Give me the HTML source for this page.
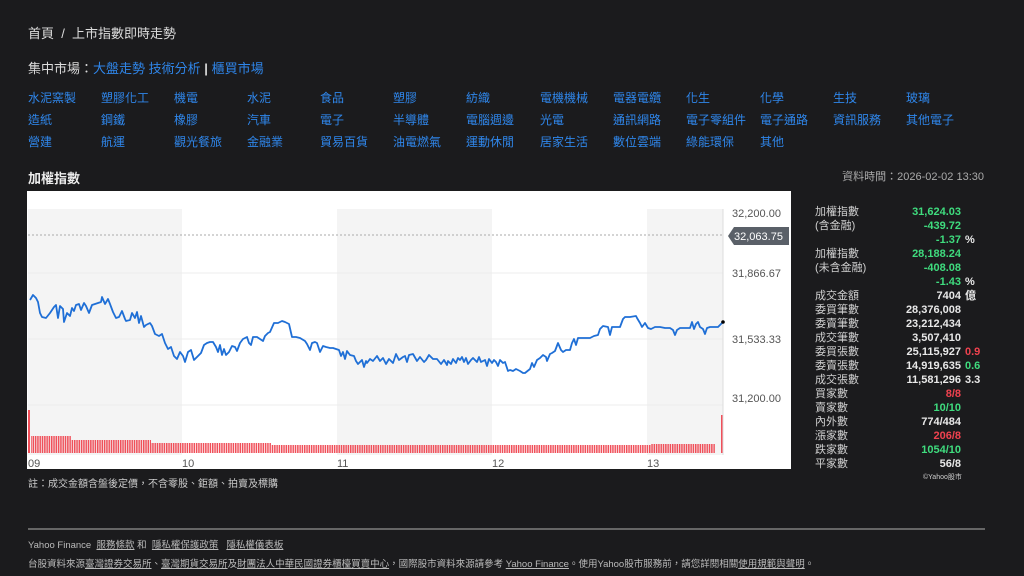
<!DOCTYPE html>
<html><head><meta charset="utf-8">
<style>
*{margin:0;padding:0;box-sizing:border-box}
body{width:1024px;height:576px;background:#1b1b1d;color:#e0e0e0;font-family:"Liberation Sans","Noto Sans CJK TC",sans-serif;position:relative;overflow:hidden}
.a{position:absolute;white-space:nowrap}
.l{color:#2f86ea}
.cat{position:absolute;font-size:12px;color:#2f86ea;line-height:14px}
.r{position:absolute;font-size:11px;line-height:14px;left:815px;color:#cfcfcf}
.v{position:absolute;font-size:11px;line-height:14px;right:63px;font-weight:bold;text-align:right}
.s{position:absolute;font-size:11px;line-height:14px;left:965px;font-weight:bold}
.g{color:#3fdc7e}.rd{color:#f0424f}.w{color:#e8e8e8}
.f{font-size:9.5px;color:#bbb}
.f u{color:#bbb}
</style></head><body>
<div class="a" style="left:28px;top:23px;font-size:13px;color:#ddd">首頁 &nbsp;/&nbsp; 上市指數即時走勢</div>
<div class="a" style="left:28px;top:58px;font-size:13px;color:#ddd">集中市場：<span class="l">大盤走勢</span> <span class="l">技術分析</span> <b>|</b> <span class="l">櫃買市場</span></div>

<div class="cat" style="left:28px;top:91px">水泥窯製</div><div class="cat" style="left:101px;top:91px">塑膠化工</div><div class="cat" style="left:174px;top:91px">機電</div><div class="cat" style="left:247px;top:91px">水泥</div><div class="cat" style="left:320px;top:91px">食品</div><div class="cat" style="left:393px;top:91px">塑膠</div><div class="cat" style="left:466px;top:91px">紡織</div><div class="cat" style="left:540px;top:91px">電機機械</div><div class="cat" style="left:613px;top:91px">電器電纜</div><div class="cat" style="left:686px;top:91px">化生</div><div class="cat" style="left:760px;top:91px">化學</div><div class="cat" style="left:833px;top:91px">生技</div><div class="cat" style="left:906px;top:91px">玻璃</div>
<div class="cat" style="left:28px;top:113px">造紙</div><div class="cat" style="left:101px;top:113px">鋼鐵</div><div class="cat" style="left:174px;top:113px">橡膠</div><div class="cat" style="left:247px;top:113px">汽車</div><div class="cat" style="left:320px;top:113px">電子</div><div class="cat" style="left:393px;top:113px">半導體</div><div class="cat" style="left:466px;top:113px">電腦週邊</div><div class="cat" style="left:540px;top:113px">光電</div><div class="cat" style="left:613px;top:113px">通訊網路</div><div class="cat" style="left:686px;top:113px">電子零組件</div><div class="cat" style="left:760px;top:113px">電子通路</div><div class="cat" style="left:833px;top:113px">資訊服務</div><div class="cat" style="left:906px;top:113px">其他電子</div>
<div class="cat" style="left:28px;top:135px">營建</div><div class="cat" style="left:101px;top:135px">航運</div><div class="cat" style="left:174px;top:135px">觀光餐旅</div><div class="cat" style="left:247px;top:135px">金融業</div><div class="cat" style="left:320px;top:135px">貿易百貨</div><div class="cat" style="left:393px;top:135px">油電燃氣</div><div class="cat" style="left:466px;top:135px">運動休閒</div><div class="cat" style="left:540px;top:135px">居家生活</div><div class="cat" style="left:613px;top:135px">數位雲端</div><div class="cat" style="left:686px;top:135px">綠能環保</div><div class="cat" style="left:760px;top:135px">其他</div>

<div class="a" style="left:28px;top:168px;font-size:13px;font-weight:bold;color:#eee">加權指數</div>
<div class="a" style="right:40px;top:168px;font-size:11px;color:#aaa">資料時間：2026-02-02 13:30</div>

<svg class="a" style="left:27px;top:191px" width="764" height="278" viewBox="27 191 764 278">
<defs><pattern id="bp" x="28" y="0" width="2.3" height="10" patternUnits="userSpaceOnUse"><rect x="0" y="0" width="1.5" height="10" fill="#f0505a"/></pattern></defs>
<rect x="27" y="191" width="764" height="278" fill="#fff"/>
<rect x="28" y="209" width="154" height="246" fill="#f4f4f4"/>
<rect x="337" y="209" width="155" height="246" fill="#f4f4f4"/>
<rect x="647" y="209" width="76" height="246" fill="#f4f4f4"/>
<g stroke="#ececec" stroke-width="1"><line x1="28" y1="273" x2="723" y2="273"/><line x1="28" y1="339" x2="723" y2="339"/><line x1="28" y1="405" x2="723" y2="405"/></g>
<line x1="28" y1="235" x2="723" y2="235" stroke="#aaa" stroke-dasharray="2,2"/>
<line x1="723" y1="209" x2="723" y2="455" stroke="#ddd"/>
<rect x="28" y="410" width="2" height="43" fill="#f0505a"/>
<rect x="31" y="436" width="40" height="17" fill="url(#bp)"/>
<rect x="71" y="440" width="80" height="13" fill="url(#bp)"/>
<rect x="151" y="443" width="120" height="10" fill="url(#bp)"/>
<rect x="271" y="445" width="380" height="8" fill="url(#bp)"/>
<rect x="651" y="444" width="64" height="9" fill="url(#bp)"/>
<rect x="721" y="415" width="1.5" height="38" fill="#f0505a"/>
<polyline fill="none" stroke="#1f6fd6" stroke-width="1.8" stroke-linejoin="round" points="30,300 33,295 36,298 38,302 40,313 42,317 46,318 50,313 54,307 56,305 58,318 60,306 63,309 64,322 67,313 70,316 72,308 74,311 76,305 79,304 81,310 84,303 86,306 89,313 92,305 95,304 98,303 101,302 102,297 105,304 108,299 110,304 113,312 116,318 119,317 122,311 125,319 126,321 130,320 132,313 135,318 137,312 139,323 141,316 144,327 146,325 150,323 152,326 155,334 159,336 162,334 165,343 168,349 171,347 174,356 177,359 180,352 183,356 185,362 188,352 191,350 194,360 197,357 201,353 204,345 207,343 210,342 213,342 216,347 218,352 220,345 222,355 224,349 226,355 229,352 232,346 235,347 237,351 240,343 243,339 247,337 249,343 251,345 253,337 257,337 260,339 263,341 265,336 268,333 270,332 274,323 278,323 282,321 285,322 289,324 292,337 296,337 300,338 305,341 307,344 310,350 312,343 315,342 317,343 320,352 323,346 326,347 330,348 333,348 336,349 339,350 341,356 343,352 345,359 347,351 350,355 354,356 356,361 358,364 360,362 362,360 364,367 366,361 367,363 370,359 373,361 377,356 380,361 383,358 386,364 389,359 393,363 396,354 399,360 403,357 405,356 407,362 409,355 413,354 417,361 420,357 424,362 426,360 429,355 433,359 437,359 441,364 444,360 447,365 448,361 451,364 453,359 456,363 458,358 460,360 462,357 464,362 466,358 468,364 471,360 473,358 475,360 477,362 479,357 481,362 483,361 485,360 487,366 489,359 492,363 494,360 496,362 498,366 500,360 503,363 505,362 508,371 510,370 513,371 516,369 520,371 523,373 525,373 530,369 532,363 534,367 537,360 540,358 543,355 546,357 547,361 550,354 552,353 555,351 558,343 561,350 563,352 566,350 570,350 572,343 574,339 576,345 578,338 582,338 586,338 590,338 594,336 598,335 600,329 603,326 608,327 610,335 612,327 615,327 620,327 623,319 625,317 630,317 636,316 637,318 640,323 642,327 645,323 648,328 651,329 655,327 660,327 665,328 670,328 673,330 675,335 677,330 680,328 686,328 690,328 692,322 694,329 696,324 698,322 700,327 703,329 705,334 707,328 710,327 713,327 718,327 723,322"/>
<circle cx="723" cy="322" r="1.8" fill="#000"/>
<g font-family="Liberation Sans,sans-serif" font-size="11" fill="#555">
<text x="732" y="217">32,200.00</text>
<text x="732" y="277">31,866.67</text>
<text x="732" y="343">31,533.33</text>
<text x="732" y="402">31,200.00</text>
<text x="28" y="467">09</text><text x="182" y="467">10</text><text x="337" y="467">11</text><text x="492" y="467">12</text><text x="647" y="467">13</text>
</g>
<path d="M728 236 L734 227 H789 V245 H734 Z" fill="#5a6068"/>
<text x="734" y="240" font-family="Liberation Sans,sans-serif" font-size="11" fill="#fff">32,063.75</text>
</svg>

<div class="r" style="top:205px">加權指數</div><div class="v g" style="top:205px">31,624.03</div>
<div class="r" style="top:219px">(含金融)</div><div class="v g" style="top:219px">-439.72</div>
<div class="v g" style="top:233px">-1.37</div><div class="s w" style="top:233px">%</div>
<div class="r" style="top:247px">加權指數</div><div class="v g" style="top:247px">28,188.24</div>
<div class="r" style="top:261px">(未含金融)</div><div class="v g" style="top:261px">-408.08</div>
<div class="v g" style="top:275px">-1.43</div><div class="s w" style="top:275px">%</div>
<div class="r" style="top:289px">成交金額</div><div class="v w" style="top:289px">7404</div><div class="s w" style="top:289px">億</div>
<div class="r" style="top:303px">委買筆數</div><div class="v w" style="top:303px">28,376,008</div>
<div class="r" style="top:317px">委賣筆數</div><div class="v w" style="top:317px">23,212,434</div>
<div class="r" style="top:331px">成交筆數</div><div class="v w" style="top:331px">3,507,410</div>
<div class="r" style="top:345px">委買張數</div><div class="v w" style="top:345px">25,115,927</div><div class="s rd" style="top:345px">0.9</div>
<div class="r" style="top:359px">委賣張數</div><div class="v w" style="top:359px">14,919,635</div><div class="s g" style="top:359px">0.6</div>
<div class="r" style="top:373px">成交張數</div><div class="v w" style="top:373px">11,581,296</div><div class="s w" style="top:373px">3.3</div>
<div class="r" style="top:387px">買家數</div><div class="v rd" style="top:387px">8/8</div>
<div class="r" style="top:401px">賣家數</div><div class="v g" style="top:401px">10/10</div>
<div class="r" style="top:415px">內外數</div><div class="v w" style="top:415px">774/484</div>
<div class="r" style="top:429px">漲家數</div><div class="v rd" style="top:429px">206/8</div>
<div class="r" style="top:443px">跌家數</div><div class="v g" style="top:443px">1054/10</div>
<div class="r" style="top:457px">平家數</div><div class="v w" style="top:457px">56/8</div>
<div class="a" style="left:923px;top:472px;font-size:7px;color:#ccc">©Yahoo股市</div>

<div class="a" style="left:28px;top:475px;font-size:10px;color:#ccc">註：成交金額含盤後定價，不含零股、鉅額、拍賣及標購</div>
<div class="a" style="left:28px;top:528px;width:957px;height:2px;background:#666"></div>
<div class="a f" style="left:28px;top:537px">Yahoo Finance &nbsp;<u>服務條款</u> 和 &nbsp;<u>隱私權保護政策</u> &nbsp; <u>隱私權儀表板</u></div>
<div class="a f" style="left:28px;top:556px">台股資料來源<u>臺灣證券交易所</u>、<u>臺灣期貨交易所</u>及<u>財團法人中華民國證券櫃檯買賣中心</u>，國際股市資料來源請參考 <u>Yahoo Finance</u>。使用Yahoo股市服務前，請您詳閱相關<u>使用規範與聲明</u>。</div>
</body></html>
